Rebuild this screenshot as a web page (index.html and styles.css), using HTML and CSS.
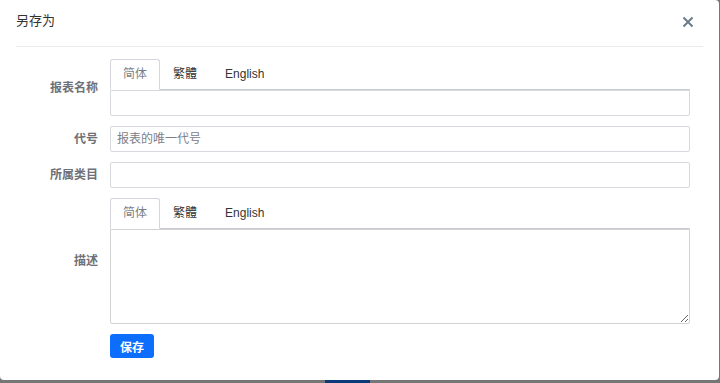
FILE: index.html
```html
<!DOCTYPE html>
<html lang="zh-CN">
  <head>
    <meta charset="utf-8">
    <title>另存为</title>
    <link rel="stylesheet" href="styles.css">
  </head>
  <body>
    <div class="modal">
      <div class="modal-header">
        <span class="modal-title">另存为</span>
        <span class="close">
          <svg width="12" height="12" viewBox="0 0 12 12"><path d="M1.5 1.5 L10.5 10.5 M10.5 1.5 L1.5 10.5" stroke="#6b7a8c" stroke-width="2" fill="none"/></svg>
        </span>
      </div>

      <div class="form">
        <div class="row">
          <label class="label">报表名称</label>
          <div class="field">
            <ul class="tabs">
              <li class="tab active">简体</li>
              <li class="tab">繁體</li>
              <li class="tab">English</li>
            </ul>
            <input class="input" type="text">
          </div>
        </div>

        <div class="row">
          <label class="label">代号</label>
          <div class="field">
            <input class="input" type="text" placeholder="报表的唯一代号">
          </div>
        </div>

        <div class="row">
          <label class="label">所属类目</label>
          <div class="field">
            <input class="input" type="text">
          </div>
        </div>

        <div class="row">
          <label class="label">描述</label>
          <div class="field">
            <ul class="tabs">
              <li class="tab active">简体</li>
              <li class="tab">繁體</li>
              <li class="tab">English</li>
            </ul>
            <textarea class="textarea"></textarea>
          </div>
        </div>

        <div class="row">
          <span class="label"></span>
          <div class="field">
            <button class="btn">保存</button>
          </div>
        </div>
      </div>
    </div>

    <div class="backdrop-strip">
      <span class="behind"></span>
    </div>
  </body>
</html>
```

FILE: styles.css
```css
html {
  height: 100%;
}
body {
  margin: 0;
  padding: 0;
  background: #767676;
  font-family: "Liberation Sans", "Noto Sans CJK SC", sans-serif;
  font-size: 12px;
  color: #333;
  overflow: hidden;
}

.modal {
  width: 719px;
  height: 380px;
  background: #fff;
  border-radius: 0 4px 4px 4px;
}

.modal-header {
  margin: 0 16px;
  height: 47px;
  border-bottom: 1px solid #e9ecef;
  display: flex;
  align-items: center;
  justify-content: space-between;
  box-sizing: border-box;
  padding: 0 9px 5px 0;
}

.modal-title {
  font-size: 13px;
  line-height: 18px;
  color: #333;
}

.close {
  display: flex;
  margin-top: 3px;
}

.form {
  padding: 12px 29px 0 16px;
  display: flex;
  flex-direction: column;
  gap: 10px;
}

.row {
  display: flex;
  align-items: center;
  gap: 12px;
}

.label {
  width: 82px;
  flex: none;
  text-align: right;
  font-weight: bold;
  color: #6e7178;
  line-height: 16px;
}

.field {
  flex: 1;
  display: flex;
  flex-direction: column;
}

.tabs {
  list-style: none;
  margin: 0;
  padding: 0;
  display: flex;
  height: 31px;
  box-sizing: border-box;
  border-bottom: 1px solid #c9ccd3;
}

.tab {
  padding: 0 12px;
  line-height: 29px;
  height: 30px;
  box-sizing: border-box;
  border: 1px solid transparent;
  border-radius: 3px 3px 0 0;
  color: #333;
  font-size: 12px;
}

.tab + .tab + .tab {
  padding-left: 14px;
}

.tab.active {
  border-color: #d3d6dc;
  border-bottom-color: #fff;
  height: 31px;
  color: #7a7f87;
}

.input, .textarea {
  display: block;
  box-sizing: border-box;
  width: 100%;
  margin: 0;
  border: 1px solid #d6d9de;
  border-radius: 2px;
  font-family: "Liberation Sans", "Noto Sans CJK SC", sans-serif;
  font-size: 12px;
  color: #333;
  padding: 0 6px;
  outline: none;
}

.input {
  height: 26px;
}

.input::placeholder {
  color: #7d8088;
}

.tabs + .input {
  border-top-left-radius: 0;
  border-top-right-radius: 0;
}

.textarea {
  height: 95px;
  border-color: #d2d2d2;
  border-top-left-radius: 0;
  border-top-right-radius: 0;
  resize: both;
}

.btn {
  width: 44px;
  height: 24px;
  border: none;
  border-radius: 3px;
  background: #0d6efd;
  color: #fff;
  font-family: "Liberation Sans", "Noto Sans CJK SC", sans-serif;
  font-size: 12px;
  font-weight: bold;
  padding: 0;
}

.backdrop-strip {
  height: 3px;
  display: flex;
}

.behind {
  margin-left: 325px;
  width: 45px;
  background: #0c3a78;
}
```
